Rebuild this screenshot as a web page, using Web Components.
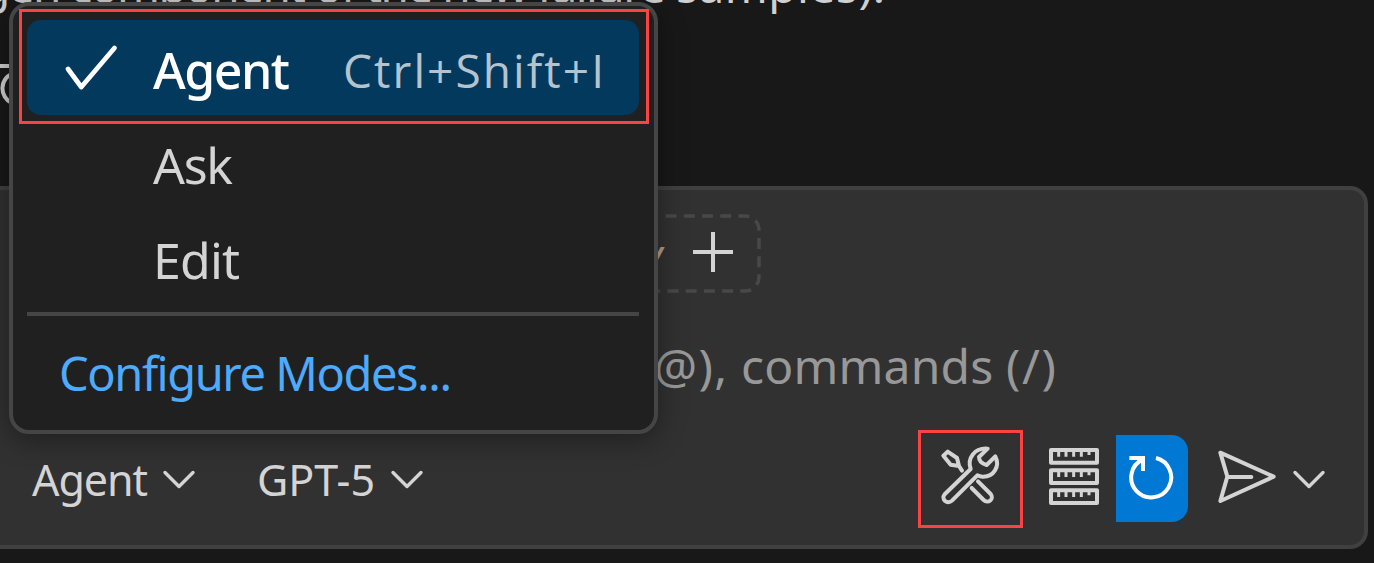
<!DOCTYPE html>
<html lang="en">
<head>
<meta charset="utf-8">
<title>Chat input</title>
<style>
html,body{margin:0;width:1374px;height:563px;overflow:hidden;background:#181818}
body{font-family:"Noto Sans","Open Sans",sans-serif;color:#ccc}
</style>
</head>
<body>
<chat-view></chat-view>
<script>
const define = (name, html, init) => customElements.define(name, class extends HTMLElement {
  constructor() {
    super();
    this.attachShadow({mode: 'open'}).innerHTML = html;
  }
  connectedCallback() { if (init) init(this); }
});

// A single line of text, tracked to fill the width given in pixels.
define('fit-text', `<style>
:host{display:block;white-space:pre;line-height:1;flex:none}
span{display:inline-block;font-kerning:normal;font-variant-ligatures:none}
</style><span><slot></slot></span>`, el => {
  const w = parseFloat(el.getAttribute('width'));
  el.style.width = w + 'px';
  const span = el.shadowRoot.querySelector('span');
  const natural = span.getBoundingClientRect().width;
  const n = el.textContent.length;
  if (n > 1) span.style.letterSpacing = ((w - natural) / (n - 1)) + 'px';
});

const icons = {
  check: ['62 43 57 48', '<path stroke-width="4.8" d="M67 69L80.3 87L113.5 48"/>'],
  chevron: ['0 0 34 20', '<path stroke-width="3.4" d="M3 3.5L17 17.5L31 3.5"/>'],
  plus: ['0 0 40 40', '<path stroke-width="4" stroke-linecap="butt" d="M0 20H40M20 0V40"/>'],
  tools: ['85 75 195 190', '<g stroke-width="12"><path d="M105 226L183 150C172 118 194 86 234 89L208 114Q208 132 231 138L257 112C272 142 252 174 219 173Q211 173 203 169L127 245C113 258 93 241 105 226Z"/><path d="M101 110L114 98L142 117L148 141L123 137ZM148 141L157 155M186 207L222 243C235 256 255 240 243 225L205 187"/></g>'],
  servers: ['410 77 162 183', '<g stroke-width="12" stroke-linejoin="round"><path d="M422 89H560V127H422ZM422 150H560V188H422ZM422 210H560V248H422Z"/><path stroke-width="9" stroke-linecap="butt" d="M445 89V109M467 89V109M490 89V109M513 89V109M536 89V104M445 150V170M467 150V170M490 150V170M513 150V170M536 150V165M445 210V230M467 210V230M490 210V230M513 210V230M536 210V225"/></g>'],
  refresh: ['650 98 147 144', '<path stroke-width="12" stroke-linejoin="miter" stroke-linecap="butt" d="M660 113H701V152M740 113A60 60 0 1 1 700 117" />'],
  send: ['112 84 180 167', '<path stroke-width="12" d="M122 95L282 167L122 240L143 167ZM143 168H215"/>'],
  spin: ['0 60 10 50', '<path stroke-width="4" d="M0 66H12M14 73A16 16 0 0 0 12 103"/>']
};
customElements.define('ui-icon', class extends HTMLElement {
  constructor() {
    super();
    const [box, body] = icons[this.getAttribute('name')];
    this.attachShadow({mode: 'open'}).innerHTML = `<style>
:host{display:block;flex:none}
svg{display:block;width:100%;height:100%;fill:none;stroke:currentColor;stroke-linecap:round;stroke-linejoin:round}
</style><svg viewBox="${box}" aria-hidden="true">${body}</svg>`;
  }
});

// Messages scrolled behind the menu.
define('chat-transcript', `<style>
:host{display:block;height:186px;overflow:hidden;color:#d0d0d0;font-size:46px}
.line{display:flex;justify-content:flex-end;width:885px;margin-top:-38px}
ui-icon{width:10px;height:50px;margin-top:52px}
</style>
<div class="line"><fit-text width="694">gen component of the new failure </fit-text><fit-text width="209">samples).</fit-text></div>
<ui-icon name="spin"></ui-icon>`);

define('mode-item', `<style>
:host{display:flex;align-items:center;box-sizing:border-box;height:95px;border-radius:14px;padding:4px 35px 0 36px;font-size:50px;color:#d4d4d4}
:host([selected]){background:#04395e;color:#fff;font-weight:500}
.mark{width:57px;height:48px;margin:-6px 33px 0 0;flex:none}
::slotted([slot=keys]){margin-left:auto;font-family:"Open Sans",sans-serif;font-size:46px;font-weight:400;color:#b4c4cf}
</style><div class="mark"><slot name="mark"></slot></div><slot></slot><slot name="keys"></slot>`);

define('mode-menu', `<style>
:host{display:block;box-sizing:border-box;width:649px;height:431.5px;border:4px solid #454545;border-radius:20px;background:#202020;padding:14px 15px 14px 14px;box-shadow:0 6px 28px rgba(0,0,0,.38)}
mode-item ui-icon{width:57px;height:48px}
hr{height:4px;border:0;margin:7px 0 0;background:#454545}
.configure{padding:34px 0 0 32px;font-size:47px;color:#4daafc}
</style>
<mode-item selected><ui-icon slot="mark" name="check"></ui-icon><fit-text width="137">Agent</fit-text><fit-text slot="keys" width="261">Ctrl+Shift+I</fit-text></mode-item>
<mode-item><fit-text width="80">Ask</fit-text></mode-item>
<mode-item><fit-text width="87">Edit</fit-text></mode-item>
<hr>
<div class="configure"><fit-text width="393">Configure Modes...</fit-text></div>`);

define('chat-toolbar', `<style>
:host{display:flex;align-items:center;height:88px;padding-left:32px;font-size:43px;color:#d4d4d4}
.chev{width:34px;height:20px;margin-left:15px}
.model{margin-left:61px}
.tools{display:grid;place-items:center;box-sizing:border-box;width:105px;height:98px;border:3px solid #fb4343;margin-left:auto}
.tools ui-icon{width:65px;height:63.3px;margin-top:-6px}
.servers{width:54px;height:61px;margin:-5px 0 0 23.5px}
.go{display:grid;place-items:center;box-sizing:border-box;width:72px;height:87px;border-radius:0 16px 16px 0;background:#0078d4;color:#fff;margin:-2px 0 0 15px}
.go ui-icon{width:49px;height:48px;margin:-3px 2px 0 0}
.send{width:60px;height:55.7px;margin:-5px 0 0 29.5px}
.last{margin:-1px 38px 0 14.7px}
</style>
<fit-text width="116">Agent</fit-text><ui-icon class="chev" name="chevron" style="margin-left:14px"></ui-icon>
<fit-text class="model" width="118">GPT-5</fit-text><ui-icon class="chev" name="chevron"></ui-icon>
<div class="tools"><ui-icon name="tools"></ui-icon></div>
<ui-icon class="servers" name="servers"></ui-icon>
<div class="go"><ui-icon name="refresh"></ui-icon></div>
<ui-icon class="send" name="send"></ui-icon>
<ui-icon class="chev last" name="chevron"></ui-icon>`);

define('chat-input', `<style>
:host{display:flex;flex-direction:column;box-sizing:border-box;width:1368px;height:363px;border:4px solid #404040;border-left:0;border-radius:0 18px 18px 0;background:#313131}
.chip{display:flex;align-items:center;justify-content:flex-end;width:160px;height:79px;margin:24px 0 0 601px;color:#d4d4d4;position:relative}
.chip svg{position:absolute;inset:0;fill:none;stroke:#484848;stroke-width:3.5}
.chip fit-text{font-size:44px;font-style:italic;color:#b59c86;margin-right:37px}
.chip ui-icon{width:40px;height:40px;margin:-4px 28px 0 0}
.hint{display:flex;margin:49px 0 0 654px;font-size:48px;color:#989898}
chat-toolbar{margin-top:auto;margin-bottom:22px}
</style>
<div class="chip"><svg width="160" height="79"><rect x="2" y="2" width="156" height="75" rx="14" stroke-dasharray="11 7.2" stroke-dashoffset="6"/></svg><fit-text width="14">y</fit-text><ui-icon name="plus"></ui-icon></div>
<div class="hint"><fit-text width="87">@), </fit-text><fit-text width="265">commands </fit-text><fit-text width="50">(/)</fit-text></div>
<chat-toolbar></chat-toolbar>`);

define('chat-view', `<style>
:host{display:flex;flex-direction:column;position:relative;width:1374px;height:563px;overflow:hidden}
mode-menu{position:absolute;left:9px;top:2px}
.callout{position:absolute;left:19px;top:9px;box-sizing:border-box;width:630px;height:115px;border:3px solid #fb4343}
</style>
<chat-transcript></chat-transcript>
<chat-input></chat-input>
<mode-menu></mode-menu>
<div class="callout"></div>`);
</script>
</body>
</html>
